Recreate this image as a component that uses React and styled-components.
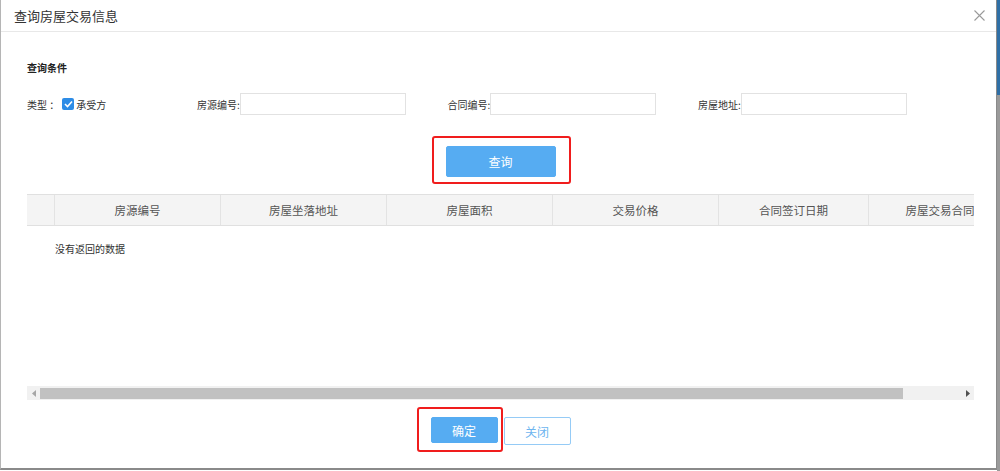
import React, { useState } from 'react'
import styled, { createGlobalStyle } from 'styled-components'

const GlobalStyle = createGlobalStyle`
  html, body {
    margin: 0;
    padding: 0;
    background: #fff;
  }
  body {
    font-family: "Noto Sans CJK SC", "Liberation Sans", sans-serif;
    color: #333;
  }
  * { box-sizing: border-box; }
`

const Page = styled.div`
  display: flex;
  width: 1000px;
  height: 471px;
  background: #fff;
`

const Dialog = styled.div`
  display: flex;
  flex-direction: column;
  width: 997px;
  height: 470px;
  background: #fff;
  border-left: 1px solid #b5b5b5;
  border-right: 1px solid #8a8a8a;
  border-bottom: 2px solid #8a8a8a;
`

const Backdrop = styled.div`
  flex: 1;
  background: linear-gradient(#2f6fa6 0, #2f6fa6 95px, #9a9a9a 95px);
`

const Header = styled.div`
  display: flex;
  align-items: center;
  justify-content: space-between;
  height: 32px;
  padding: 0 9px 0 13px;
  border-bottom: 1px solid #e8e8e8;
`

const Title = styled.h1`
  margin: 0;
  font-size: 13px;
  font-weight: 400;
  color: #333;
`

const Close = styled.button`
  display: flex;
  align-items: center;
  justify-content: center;
  width: 16px;
  height: 16px;
  padding: 0;
  border: none;
  background: none;
  cursor: pointer;
`

const Body = styled.div`
  display: flex;
  flex-direction: column;
  padding: 0 22px 0 26px;
`

const SectionTitle = styled.div`
  margin-top: 29px;
  height: 14px;
  line-height: 14px;
  font-size: 10px;
  font-weight: 700;
  color: #222;
`

const Filters = styled.div`
  display: grid;
  grid-template-columns: 170px repeat(3, 250.5px);
  align-items: center;
  margin-top: 18px;
  height: 22px;
  font-size: 10px;
  color: #333;
`

const Field = styled.label`
  display: flex;
  align-items: center;
`

const Check = styled.span`
  display: inline-flex;
  align-items: center;
  justify-content: center;
  width: 12px;
  height: 12px;
  margin: 0 2px 0 3px;
  border-radius: 2px;
  background: #2d8ce6;
`

const Label = styled.span`
  white-space: nowrap;
  color: #333;
`

const Input = styled.input`
  width: 166px;
  height: 22px;
  border: 1px solid #e2e2e2;
  border-radius: 0;
  padding: 0 4px;
  outline: none;
  font: inherit;
`

const Center = styled.div`
  display: flex;
  justify-content: center;
  gap: 6px;
  margin-top: ${({ $top }) => $top}px;
`

const Marked = styled.div`
  position: relative;
  display: flex;
  &::after {
    content: '';
    position: absolute;
    top: -10px;
    bottom: -7px;
    left: -14px;
    right: ${({ $right }) => $right}px;
    border: 2px solid #f01d1d;
    border-radius: 3px;
    pointer-events: none;
  }
`

const Button = styled.button`
  width: ${({ $w }) => $w}px;
  height: ${({ $h }) => $h}px;
  padding: 0;
  border: 1px solid ${({ $ghost }) => ($ghost ? '#95cbf6' : '#56acf2')};
  border-radius: 2px;
  background: ${({ $ghost }) => ($ghost ? '#fff' : '#56acf2')};
  color: ${({ $ghost }) => ($ghost ? '#6db5ef' : '#fff')};
  font-family: inherit;
  font-size: 12px;
  cursor: pointer;
`

const Grid = styled.div`
  display: flex;
  flex-direction: column;
  margin-top: 17px;
  width: 947px;
  height: 206px;
  overflow: hidden;
`

const HeadRow = styled.div`
  display: flex;
  flex-shrink: 0;
  height: 32px;
  background: #f4f4f4;
  border-top: 1px solid #e0e0e0;
  border-bottom: 1px solid #e0e0e0;
`

const HeadCell = styled.div`
  display: flex;
  align-items: center;
  justify-content: center;
  flex-shrink: 0;
  width: ${({ $w }) => $w}px;
  border-right: 1px solid #e3e3e3;
  font-size: 11.5px;
  color: #555;
  white-space: nowrap;
`

const Empty = styled.div`
  flex: 1;
  padding: 15px 0 0 28px;
  font-size: 10px;
  color: #333;
`

const Scrollbar = styled.div`
  display: flex;
  align-items: center;
  flex-shrink: 0;
  height: 14px;
  background: #f1f1f1;
`

const Arrow = styled.div`
  display: flex;
  align-items: center;
  justify-content: center;
  width: 13px;
  height: 14px;
`

const Thumb = styled.div`
  height: 11px;
  background: #c1c1c1;
`

const Track = styled.div`
  flex: 1;
  display: flex;
  height: 100%;
  align-items: center;
`

const columns = [
  { w: 28, t: '' },
  { w: 166, t: '房源编号' },
  { w: 166, t: '房屋坐落地址' },
  { w: 166, t: '房屋面积' },
  { w: 166, t: '交易价格' },
  { w: 150, t: '合同签订日期' },
  { w: 166, t: '房屋交易合同编号' },
]

const fields = ['房源编号:', '合同编号:', '房屋地址:']

const App = () => {
  const [values, setValues] = useState({})

  return (
    <Page>
      <GlobalStyle />
      <Dialog>
        <Header>
          <Title>查询房屋交易信息</Title>
          <Close aria-label="关闭">
            <svg width="11" height="11" viewBox="0 0 11 11">
              <path d="M0.5 0.5 L10.5 10.5 M10.5 0.5 L0.5 10.5" stroke="#9a9a9a" strokeWidth="1.1" fill="none" />
            </svg>
          </Close>
        </Header>
        <Body>
          <SectionTitle>查询条件</SectionTitle>
          <Filters>
            <Field>
              <Label>类型 ：</Label>
              <Check>
                <svg width="9" height="8" viewBox="0 0 9 8">
                  <path d="M1 4 L3.5 6.5 L8 1.5" stroke="#fff" strokeWidth="1.6" fill="none" />
                </svg>
              </Check>
              <Label>承受方</Label>
            </Field>
            {fields.map((f) => (
              <Field key={f}>
                <Label>{f}</Label>
                <Input
                  value={values[f] || ''}
                  onChange={(e) => setValues({ ...values, [f]: e.target.value })}
                />
              </Field>
            ))}
          </Filters>
          <Center $top={31}>
            <Marked $right={-15}>
              <Button $w={110} $h={31}>查询</Button>
            </Marked>
          </Center>
          <Grid>
            <HeadRow>
              {columns.map((c, i) => (
                <HeadCell key={i} $w={c.w}>{c.t}</HeadCell>
              ))}
            </HeadRow>
            <Empty>没有返回的数据</Empty>
            <Scrollbar>
              <Arrow>
                <svg width="4" height="7" viewBox="0 0 4 7"><path d="M4 0 L0 3.5 L4 7 Z" fill="#a6a6a6" /></svg>
              </Arrow>
              <Track>
                <Thumb style={{ width: 863 }} />
              </Track>
              <Arrow>
                <svg width="4" height="7" viewBox="0 0 4 7"><path d="M0 0 L4 3.5 L0 7 Z" fill="#505050" /></svg>
              </Arrow>
            </Scrollbar>
          </Grid>
          <Center $top={17}>
            <Marked $right={-5}>
              <Button $w={67} $h={26}>确定</Button>
            </Marked>
            <Button $w={67} $h={28} $ghost>关闭</Button>
          </Center>
        </Body>
      </Dialog>
      <Backdrop />
    </Page>
  )
}

export default App
